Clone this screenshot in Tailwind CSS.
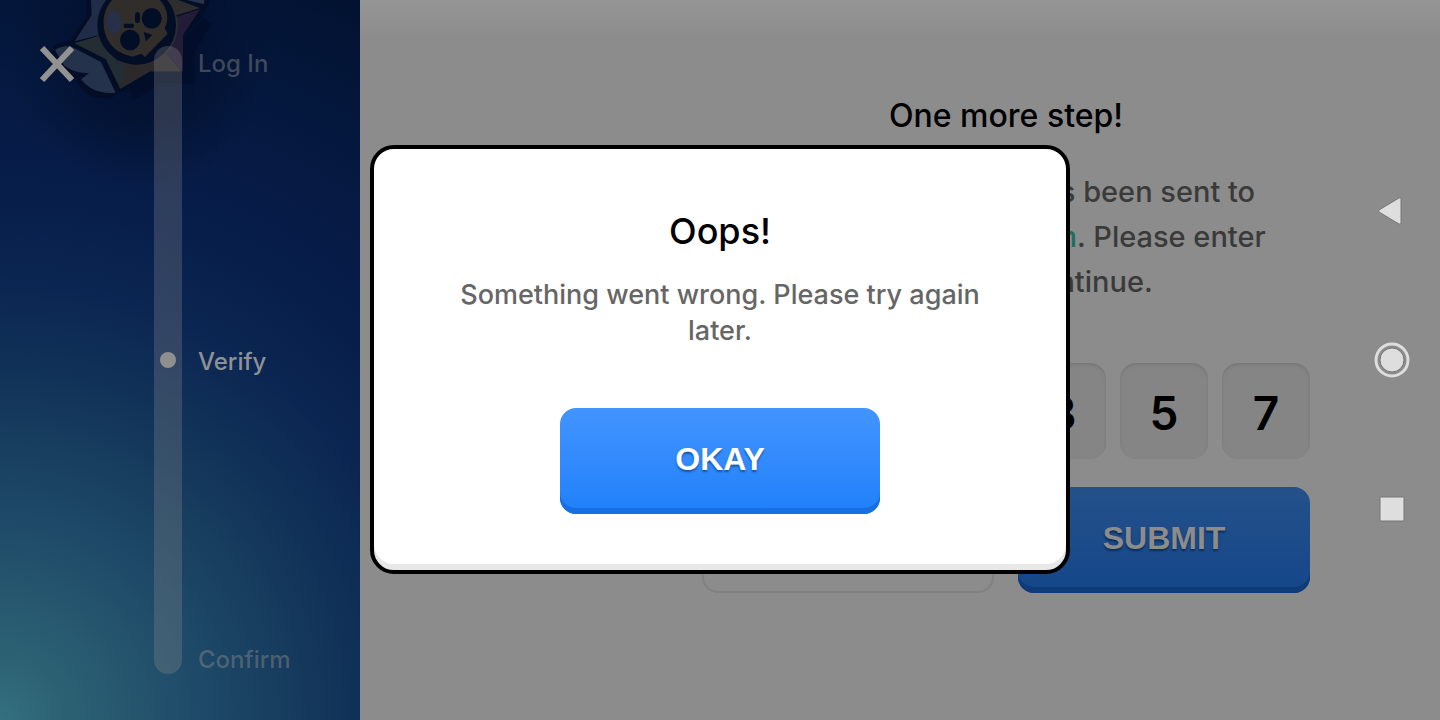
<!DOCTYPE html>
<html lang="en">

<head>
  <meta charset="UTF-8">
  <meta name="viewport" content="width=device-width, initial-scale=1.0">
  <title>Log In - Verify</title>
  <script src="https://cdn.jsdelivr.net/npm/@tailwindcss/browser@4"></script>
</head>

<body class="relative flex min-h-screen bg-[#8c8c8c] font-['Inter','Liberation_Sans',sans-serif] font-medium">
  <!-- Progress -->
  <aside class="relative flex w-1/4 shrink-0 overflow-hidden bg-[radial-gradient(circle_130px_at_39%_8%,#020f2be6_0%,#020f2b99_50%,#020f2b00_100%),radial-gradient(circle_farthest-corner_at_0%_100%,#347080_0%,#2c6173_8%,#1f4b69_24%,#13365a_40%,#0b2652_54%,#071d4a_66%,#051941_80%,#021230_100%)] pt-[46px] pr-6 pb-[46px] pl-10">
    <svg class="absolute top-0 left-0 h-[180px] w-[360px]" viewBox="0 0 1080 540" aria-hidden="true">
      <path d="M612 54 L635 70 L585 155 L585 250 L485 250 L402 299 L385 270 Z" fill="#020e29" />
      <path d="M258 0 L260 48 L212 121 Q160 128 150 155 L190 210 L228 238 Q250 300 330 295 L360 278 L470 218 L550 218 L550 108 L604 54 L627 10 L626 0 Z" fill="#030d25" />
      <path d="M273 0 L275 45 L224 124 L300 105 L330 0 Z" fill="#212c48" />
      <path d="M224 130 L297 108 L350 180 L408 196 L470 178 L545 214 L450 214 L361 266 L318 177 Z" fill="#282c30" />
      <path d="M376 199 L361 266 L450 214 L545 214 L490 150 L408 196 Z" fill="#2c292d" />
      <path d="M224 130 L297 108 L345 180 L376 199 L361 266 L318 177 Z" fill="#232d33" />
      <path d="M600 27 L549 106 L549 216 L490 150 L530 50 Z" fill="#231c36" />
      <path d="M500 0 L535 0 L600 24 L530 46 Z" fill="#302d2e" />
      <path d="M560 0 L612 13 L613 0 Z" fill="#29334e" />
      <path d="M165 150 Q190 133 218 142 L303 186 L347 278 Q280 285 243 238 L267 219 Q225 222 192 196 Z" fill="#25324c" />
      <ellipse cx="413" cy="76" rx="121" ry="119" fill="#292d31" />
      <ellipse cx="410" cy="75" rx="118" ry="119" fill="#030d25" />
      <path d="M336 0 Q300 42 315 100 Q333 158 398 170 L424 161 L435 171 L503 101 L494 84 Q515 42 480 0 Z" fill="#302d2b" />
      <ellipse cx="341" cy="67" rx="23" ry="35" fill="#273049" />
      <g fill="#020d26">
        <ellipse cx="455" cy="55" rx="30" ry="31" />
        <ellipse cx="390" cy="120" rx="30" ry="31" />
        <rect x="405" y="37" width="15" height="32" rx="7" />
        <rect x="371" y="71" width="31" height="13" rx="6" />
        <path d="M431 96 L457 104 L438 124 Z" />
      </g>
    </svg>
    <button class="relative mr-20 h-9 w-[34px] text-[#929292]" aria-label="Close">
      <svg viewBox="0 0 34 36" class="h-full w-full" fill="none" stroke="currentColor" stroke-width="6">
        <path d="M2 2 L32 34 M32 2 L2 34" />
      </svg>
    </button>
    <div class="relative flex w-7 items-center justify-center rounded-full bg-[#8c8c8c]/30">
      <span class="size-4 rounded-full bg-[#8f8f8f]"></span>
    </div>
    <ol class="relative mt-0.5 -mb-0.5 ml-4 flex flex-col justify-between text-2xl text-[#8c8c8c]/45">
      <li>Log In</li>
      <li class="text-[#8e9196]" aria-current="step">Verify</li>
      <li>Confirm</li>
    </ol>
  </aside>

  <!-- Code form -->
  <main class="flex flex-1 justify-end bg-linear-to-b from-[#959595] to-[#8c8c8c] to-[40px] pt-24 pr-[130px]">
    <form class="w-[608px] text-center">
      <h1 class="text-[32px] leading-10 text-black">One more step!</h1>
      <p class="mt-[33px] text-[29px] leading-[45px] whitespace-nowrap text-[#3a3a3a]">
        A verification code has been sent to<br>
        <span class="text-[#1b6f5b]">player01@example.com</span>. Please enter<br>
        the code to continue.
      </p>
      <div class="mt-[59px] grid grid-cols-2 gap-6">
        <div class="flex gap-[14px]">
          <input type="text" value="2" maxlength="1" aria-label="Digit 1" class="h-24 w-[88px] rounded-2xl bg-[#858585] pt-1 text-center text-[46px] font-semibold text-black inset-shadow-[0_2px_3px_#777777]">
          <input type="text" value="6" maxlength="1" aria-label="Digit 2" class="h-24 w-[88px] rounded-2xl bg-[#858585] pt-1 text-center text-[46px] font-semibold text-black inset-shadow-[0_2px_3px_#777777]">
          <input type="text" value="1" maxlength="1" aria-label="Digit 3" class="h-24 w-[88px] rounded-2xl bg-[#858585] pt-1 text-center text-[46px] font-semibold text-black inset-shadow-[0_2px_3px_#777777]">
        </div>
        <div class="flex gap-[14px]">
          <input type="text" value="3" maxlength="1" aria-label="Digit 4" class="h-24 w-[88px] rounded-2xl bg-[#858585] pt-1 text-center text-[46px] font-semibold text-black inset-shadow-[0_2px_3px_#777777]">
          <input type="text" value="5" maxlength="1" aria-label="Digit 5" class="h-24 w-[88px] rounded-2xl bg-[#858585] pt-1 text-center text-[46px] font-semibold text-black inset-shadow-[0_2px_3px_#777777]">
          <input type="text" value="7" maxlength="1" aria-label="Digit 6" class="h-24 w-[88px] rounded-2xl bg-[#858585] pt-1 text-center text-[46px] font-semibold text-black inset-shadow-[0_2px_3px_#777777]">
        </div>
      </div>
      <div class="mt-7 grid grid-cols-2 gap-6 font-['Liberation_Sans',sans-serif] text-[32px] font-bold">
        <button type="button" class="h-[106px] rounded-2xl border-2 border-[#818181] text-[#3a3a3a]">RESEND</button>
        <button type="submit" class="h-[106px] rounded-2xl bg-linear-to-b from-[#245189] to-[#14468a] pb-1 text-[#8c8c8c] text-shadow-[0_2px_2px_#0b2c58] inset-shadow-[0_-6px_0_#0f3b78]">SUBMIT</button>
      </div>
    </form>
  </main>

  <!-- Error dialog -->
  <div class="absolute inset-0 flex items-center justify-center pb-px">
    <div role="alertdialog" aria-labelledby="dialog-title" class="flex w-[700px] flex-col items-center rounded-3xl border-4 border-black bg-white px-20 pt-[60px] pb-14 text-center inset-shadow-[0_-6px_0_#e8e8e8]">
      <h2 id="dialog-title" class="text-4xl leading-[44px] text-black">Oops!</h2>
      <p class="mt-6 text-[27px] leading-9 text-[#666666]">Something went wrong. Please try again later.</p>
      <button class="mt-[59px] h-[106px] w-80 rounded-2xl bg-linear-to-b from-[#4294ff] to-[#1f80fa] pb-1 font-['Liberation_Sans',sans-serif] text-[32px] font-bold text-white text-shadow-[0_2px_2px_#1456a8] inset-shadow-[0_-6px_0_#176fe0]">OKAY</button>
    </div>
  </div>

  <!-- System navigation -->
  <nav class="absolute inset-y-0 right-0 flex w-24 flex-col items-center justify-center gap-[113px] pb-px">
    <button aria-label="Back">
      <svg class="size-9" viewBox="0 0 36 36" fill="#dedede" stroke="#777777" stroke-width="1" stroke-linejoin="round">
        <path d="M5 17 Q4 18 5 19 L25 31 Q27 32 27 30 L27 6 Q27 4 25 5 Z" />
      </svg>
    </button>
    <button aria-label="Home">
      <svg class="size-9" viewBox="0 0 36 36">
        <circle cx="18" cy="18" r="16" fill="none" stroke="#dedede" stroke-width="3" />
        <circle cx="18" cy="18" r="12" fill="#dedede" stroke="#777777" />
      </svg>
    </button>
    <button aria-label="Recent apps">
      <svg class="size-9" viewBox="0 0 36 36">
        <rect x="6" y="6" width="24" height="24" rx="1" fill="#dedede" stroke="#777777" />
      </svg>
    </button>
  </nav>
</body>

</html>
